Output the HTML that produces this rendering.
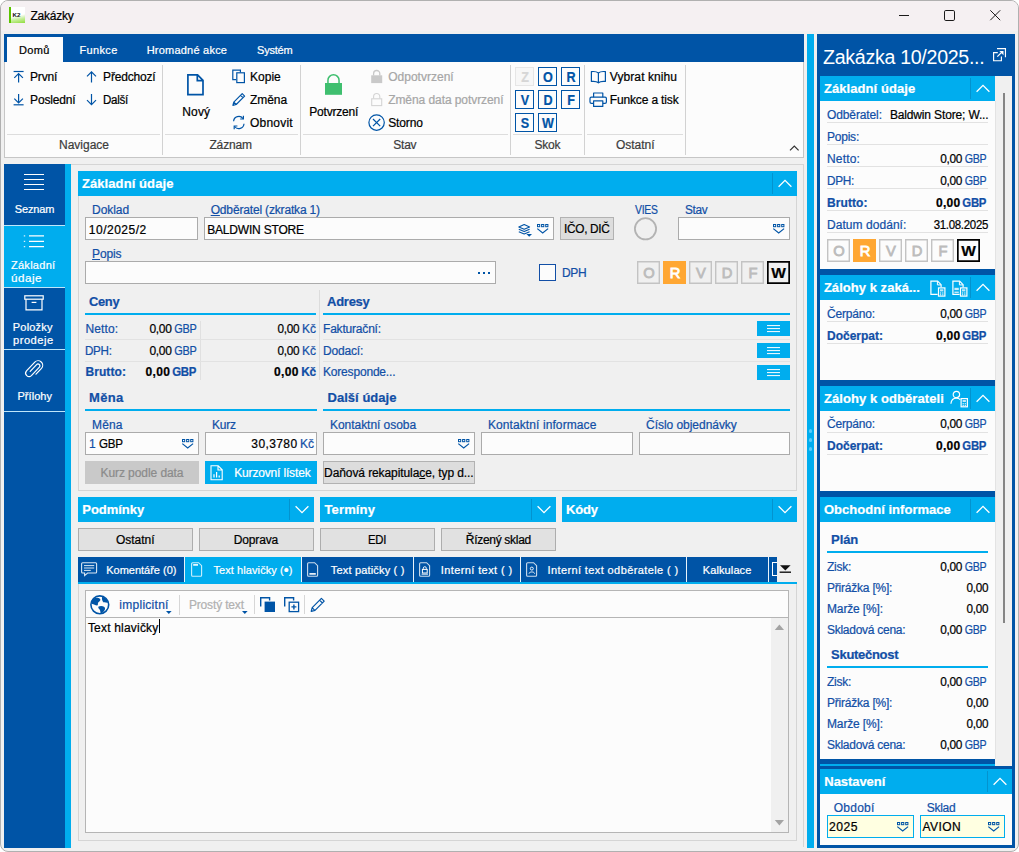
<!DOCTYPE html>
<html lang="cs"><head><meta charset="utf-8"><title>Zakázky</title>
<style>
html,body{margin:0;padding:0;}
body{width:1019px;height:852px;position:relative;overflow:hidden;background:#fff;font-family:"Liberation Sans",sans-serif;}
body div,body span.t,body svg{position:absolute;}
.t{white-space:nowrap;-webkit-text-stroke:0.22px currentColor;}
div.t span{position:static;}
svg{overflow:visible;}
u{text-decoration:underline;text-underline-offset:1px;}
</style></head><body>
<div style="left:0px;top:0px;width:1019px;height:852px;background:#f0f0f0;border:1px solid #b0b0b0;box-sizing:border-box;border-radius:8px;overflow:hidden;"><div style="left:0;top:0;width:1019px;height:30px;background:#f5f0f2"></div></div>
<div style="left:9px;top:7px;width:16px;height:16px;background:linear-gradient(168deg,#fff 52%,#c9efa0 72%,#8fdc3c 100%);border-left:2px solid #5cc400;box-sizing:border-box;"></div>
<span class="t" id="t1" style="top:5.40px;font-size:6.2px;color:#111;line-height:16px;font-weight:bold;left:12.50px;line-height:8px;margin-top:6px;-webkit-text-stroke:0;">K2</span>
<span class="t" id="t2" style="top:7.80px;font-size:12px;color:#000;line-height:16px;letter-spacing:-0.241px;left:30.50px;">Zakázky</span>
<svg style="left:895px;top:5px;" width="120" height="22" viewBox="0 0 120 22"><g fill="none" stroke="#1a1a1a" stroke-width="1">
<path d="M4 10.5 H14"/><rect x="49.5" y="5.5" width="10" height="10" rx="1.3"/><path d="M95.3 5.3 L105.2 15.2 M105.2 5.3 L95.3 15.2"/></g></svg>
<div style="left:4px;top:34px;width:800px;height:28px;background:#0054a6;"></div>
<div style="left:4px;top:62px;width:800px;height:96px;background:#fcfcfc;border:1px solid #c6c6c6;box-sizing:border-box;border-top:none;"></div>
<div style="left:7px;top:37px;width:56px;height:25px;background:#fcfcfc;"></div>
<span class="t" id="t3" style="top:42.30px;font-size:11px;color:#000;line-height:16px;letter-spacing:0.364px;left:19.00px;">Domů</span>
<span class="t" id="t4" style="top:42.30px;font-size:11px;color:#fff;line-height:16px;letter-spacing:0.354px;left:79.50px;">Funkce</span>
<span class="t" id="t5" style="top:42.30px;font-size:11px;color:#fff;line-height:16px;letter-spacing:0.219px;left:146.70px;">Hromadné akce</span>
<span class="t" id="t6" style="top:42.30px;font-size:11px;color:#fff;line-height:16px;letter-spacing:-0.198px;left:257.00px;">Systém</span>
<div style="left:162px;top:65px;width:1px;height:90px;background:#d2d2d2;"></div>
<div style="left:300px;top:65px;width:1px;height:90px;background:#d2d2d2;"></div>
<div style="left:510px;top:65px;width:1px;height:90px;background:#d2d2d2;"></div>
<div style="left:584px;top:65px;width:1px;height:90px;background:#d2d2d2;"></div>
<div style="left:685px;top:65px;width:1px;height:90px;background:#d2d2d2;"></div>
<div style="left:7px;top:134px;width:153px;height:1px;background:#dddddd;"></div>
<div style="left:165px;top:134px;width:133px;height:1px;background:#dddddd;"></div>
<div style="left:303px;top:134px;width:205px;height:1px;background:#dddddd;"></div>
<div style="left:513px;top:134px;width:69px;height:1px;background:#dddddd;"></div>
<div style="left:587px;top:134px;width:96px;height:1px;background:#dddddd;"></div>
<div class="t" style="top:137.20px;font-size:12px;color:#3c3c3c;line-height:16px;letter-spacing:-0.004px;left:-66.00px;width:300px;text-align:center;"><span id="t7">Navigace</span></div>
<div class="t" style="top:137.20px;font-size:12px;color:#3c3c3c;line-height:16px;letter-spacing:-0.143px;left:80.68px;width:300px;text-align:center;"><span id="t8">Záznam</span></div>
<div class="t" style="top:137.20px;font-size:12px;color:#3c3c3c;line-height:16px;letter-spacing:-0.254px;left:254.87px;width:300px;text-align:center;"><span id="t9">Stav</span></div>
<div class="t" style="top:137.20px;font-size:12px;color:#3c3c3c;line-height:16px;letter-spacing:-0.172px;left:397.41px;width:300px;text-align:center;"><span id="t10">Skok</span></div>
<div class="t" style="top:137.20px;font-size:12px;color:#3c3c3c;line-height:16px;letter-spacing:-0.027px;left:485.24px;width:300px;text-align:center;"><span id="t11">Ostatní</span></div>
<svg style="left:789px;top:144px;" width="11" height="8" viewBox="0 0 11 8"><path d="M1 6.3 L5.3 2 L9.6 6.3" fill="none" stroke="#333" stroke-width="1.2"/></svg>
<svg style="left:13px;top:70px;" width="12" height="14" viewBox="0 0 12 14"><g fill="none" stroke="#0054a6" stroke-width="1.2"><path d="M0.6 1.5 H10.6"/><path d="M5.6 12.6 V3.6 M1.3 7.8 L5.6 3.5 L9.9 7.8"/></g></svg>
<span class="t" id="t12" style="top:68.90px;font-size:12px;color:#000;line-height:16px;letter-spacing:-0.223px;left:30.10px;">První</span>
<svg style="left:86px;top:70px;" width="12" height="14" viewBox="0 0 12 14"><g fill="none" stroke="#0054a6" stroke-width="1.2"><path d="M5.5 12.6 V1.8 M1 6.3 L5.5 1.8 L10 6.3"/></g></svg>
<span class="t" id="t13" style="top:68.90px;font-size:12px;color:#000;line-height:16px;letter-spacing:-0.181px;left:103.10px;">Předchozí</span>
<svg style="left:13px;top:93px;" width="12" height="14" viewBox="0 0 12 14"><g fill="none" stroke="#0054a6" stroke-width="1.2"><path d="M0.6 11.8 H10.6"/><path d="M5.6 1 V9.8 M1.3 5.6 L5.6 9.9 L9.9 5.6"/></g></svg>
<span class="t" id="t14" style="top:91.70px;font-size:12px;color:#000;line-height:16px;letter-spacing:-0.175px;left:30.10px;">Poslední</span>
<svg style="left:86px;top:93px;" width="12" height="14" viewBox="0 0 12 14"><g fill="none" stroke="#0054a6" stroke-width="1.2"><path d="M5.5 1 V11.6 M1 7.1 L5.5 11.6 L10 7.1"/></g></svg>
<span class="t" id="t15" style="top:91.70px;font-size:12px;color:#000;line-height:16px;letter-spacing:-0.300px;left:103.10px;transform:scaleX(0.9635);transform-origin:0 50%;">Další</span>
<svg style="left:186px;top:73px;" width="20" height="24" viewBox="0 0 20 24"><path d="M1.9 1.9 H11.6 L17 7.3 V21.7 H1.9 Z M11.3 2.2 V7.6 H16.7" fill="none" stroke="#0054a6" stroke-width="1.7" stroke-linejoin="miter"/></svg>
<div class="t" style="top:103.60px;font-size:12px;color:#000;line-height:16px;letter-spacing:0.164px;left:46.28px;width:300px;text-align:center;"><span id="t16">Nový</span></div>
<svg style="left:232px;top:69px;" width="14" height="15" viewBox="0 0 14 15"><g fill="none" stroke="#0054a6" stroke-width="1.2"><path d="M4.2 10.6 H0.8 V1.2 H8.4 V3.4"/><rect x="4.8" y="3.8" width="7.6" height="9.8" fill="#fcfcfc"/></g></svg>
<span class="t" id="t17" style="top:69.00px;font-size:12px;color:#000;line-height:16px;letter-spacing:0.019px;left:250.00px;">Kopie</span>
<svg style="left:232px;top:92px;" width="14" height="15" viewBox="0 0 14 15"><g fill="none" stroke="#0054a6" stroke-width="1.2" stroke-linejoin="round"><path d="M10.2 1.7 L12.6 4.1 L4.2 12.5 L0.9 13.4 L1.8 10.1 Z M8.6 3.3 L11 5.7 M1.9 10.2 L4.1 12.4"/></g></svg>
<span class="t" id="t18" style="top:91.70px;font-size:12px;color:#000;line-height:16px;letter-spacing:-0.052px;left:250.00px;">Změna</span>
<svg style="left:232px;top:115px;" width="14" height="15" viewBox="0 0 14 15"><g fill="none" stroke="#0054a6" stroke-width="1.2"><path d="M1.6 6.3 A5.2 5.2 0 0 1 11 3.6 M12 8.8 A5.2 5.2 0 0 1 2.6 11.5"/><path d="M11.4 0.8 V4 H8.2 M2.2 14.2 V11 H5.4"/></g></svg>
<span class="t" id="t19" style="top:114.60px;font-size:12px;color:#000;line-height:16px;letter-spacing:0.220px;left:250.00px;">Obnovit</span>
<svg style="left:324px;top:73px;" width="20" height="24" viewBox="0 0 20 24"><path d="M3.95 10.5 V7.3 A5.55 5.55 0 0 1 15.05 7.3 V10.5" fill="none" stroke="#3fbf6f" stroke-width="1.5"/><rect x="1" y="10" width="17" height="11.8" fill="#3fbf6f"/></svg>
<div class="t" style="top:103.60px;font-size:12px;color:#000;line-height:16px;letter-spacing:-0.189px;left:183.71px;width:300px;text-align:center;"><span id="t20">Potvrzení</span></div>
<svg style="left:370px;top:69px;" width="14" height="15" viewBox="0 0 14 15"><path d="M3.6 6.6 V4.6 A3.1 3.1 0 0 1 9.8 4.6 V6.6" fill="none" stroke="#c9c9c9" stroke-width="1.3"/><rect x="1.2" y="6.3" width="11" height="7.8" fill="#c9c9c9"/></svg>
<span class="t" id="t21" style="top:69.00px;font-size:12px;color:#a6a6a6;line-height:16px;letter-spacing:0.011px;left:388.20px;">Odpotvrzení</span>
<svg style="left:370px;top:92px;" width="14" height="15" viewBox="0 0 14 15"><path d="M3.6 6.6 V4.6 A3.1 3.1 0 0 1 9.8 4.6 V6.6" fill="none" stroke="#d4d4d4" stroke-width="1.1"/><rect x="1.7" y="6.8" width="10" height="6.8" fill="none" stroke="#d4d4d4" stroke-width="1.1"/></svg>
<span class="t" id="t22" style="top:91.70px;font-size:12px;color:#a6a6a6;line-height:16px;letter-spacing:-0.072px;left:388.20px;">Změna data potvrzení</span>
<svg style="left:368px;top:114px;" width="18" height="18" viewBox="0 0 18 18"><g fill="none" stroke="#0054a6" stroke-width="1.2"><circle cx="8.6" cy="8.6" r="7.7"/><path d="M5 5 L12.2 12.2 M12.2 5 L5 12.2"/></g></svg>
<span class="t" id="t23" style="top:114.60px;font-size:12px;color:#000;line-height:16px;letter-spacing:-0.110px;left:388.20px;">Storno</span>
<div style="left:515px;top:67px;width:19px;height:19px;background:#f7f7f7;border:1px solid #e6e6e6;box-sizing:border-box;"></div>
<div class="t" style="top:69.20px;font-size:14px;color:#d6d6d6;line-height:16px;font-weight:bold;left:374.50px;width:300px;text-align:center;transform:scaleX(0.9);"><span id="t24">Z</span></div>
<div style="left:538px;top:67px;width:19px;height:19px;background:#fcfcfc;border:1px solid #0054a6;box-sizing:border-box;"></div>
<div class="t" style="top:69.20px;font-size:14px;color:#0054a6;line-height:16px;font-weight:bold;left:397.50px;width:300px;text-align:center;transform:scaleX(0.9);"><span id="t25">O</span></div>
<div style="left:561px;top:67px;width:19px;height:19px;background:#fcfcfc;border:1px solid #0054a6;box-sizing:border-box;"></div>
<div class="t" style="top:69.20px;font-size:14px;color:#0054a6;line-height:16px;font-weight:bold;left:420.50px;width:300px;text-align:center;transform:scaleX(0.9);"><span id="t26">R</span></div>
<div style="left:515px;top:90px;width:19px;height:19px;background:#fcfcfc;border:1px solid #0054a6;box-sizing:border-box;"></div>
<div class="t" style="top:92.20px;font-size:14px;color:#0054a6;line-height:16px;font-weight:bold;left:374.50px;width:300px;text-align:center;transform:scaleX(0.9);"><span id="t27">V</span></div>
<div style="left:538px;top:90px;width:19px;height:19px;background:#fcfcfc;border:1px solid #0054a6;box-sizing:border-box;"></div>
<div class="t" style="top:92.20px;font-size:14px;color:#0054a6;line-height:16px;font-weight:bold;left:397.50px;width:300px;text-align:center;transform:scaleX(0.9);"><span id="t28">D</span></div>
<div style="left:561px;top:90px;width:19px;height:19px;background:#fcfcfc;border:1px solid #0054a6;box-sizing:border-box;"></div>
<div class="t" style="top:92.20px;font-size:14px;color:#0054a6;line-height:16px;font-weight:bold;left:420.50px;width:300px;text-align:center;transform:scaleX(0.9);"><span id="t29">F</span></div>
<div style="left:515px;top:113px;width:19px;height:19px;background:#fcfcfc;border:1px solid #0054a6;box-sizing:border-box;"></div>
<div class="t" style="top:115.20px;font-size:14px;color:#0054a6;line-height:16px;font-weight:bold;left:374.50px;width:300px;text-align:center;transform:scaleX(0.9);"><span id="t30">S</span></div>
<div style="left:538px;top:113px;width:19px;height:19px;background:#fcfcfc;border:1px solid #0054a6;box-sizing:border-box;"></div>
<div class="t" style="top:115.20px;font-size:14px;color:#0054a6;line-height:16px;font-weight:bold;left:397.50px;width:300px;text-align:center;transform:scaleX(0.9);"><span id="t31">W</span></div>
<svg style="left:590px;top:70px;" width="17" height="14" viewBox="0 0 17 14"><g fill="none" stroke="#0054a6" stroke-width="1.2" stroke-linejoin="round"><path d="M8.4 3 C6.8 1.6 4 1.3 1.4 1.6 V11.4 C4 11.1 6.8 11.4 8.4 12.8 C10 11.4 12.8 11.1 15.4 11.4 V1.6 C12.8 1.3 10 1.6 8.4 3 Z M8.4 3 V12.6"/></g></svg>
<span class="t" id="t32" style="top:69.00px;font-size:12px;color:#000;line-height:16px;letter-spacing:0.086px;left:609.80px;">Vybrat knihu</span>
<svg style="left:589px;top:92px;" width="19" height="16" viewBox="0 0 19 16"><g fill="none" stroke="#0054a6" stroke-width="1.2" stroke-linejoin="round"><path d="M4.6 5.2 V1 H13.8 V5.2"/><path d="M4.6 11.4 H2.4 A1.4 1.4 0 0 1 1 10 V6.6 A1.4 1.4 0 0 1 2.4 5.2 H16 A1.4 1.4 0 0 1 17.4 6.6 V10 A1.4 1.4 0 0 1 16 11.4 H13.8"/><rect x="4.6" y="8.8" width="9.2" height="5.6"/></g></svg>
<span class="t" id="t33" style="top:91.70px;font-size:12px;color:#000;line-height:16px;letter-spacing:-0.154px;left:609.80px;">Funkce a tisk</span>
<div style="left:807px;top:34px;width:7px;height:814px;background:#00adee;"></div>
<div style="left:808.9px;top:429.2px;width:3.6px;height:3.6px;background:#57cbfb;border-radius:50%;"></div>
<div style="left:808.9px;top:438.2px;width:3.6px;height:3.6px;background:#57cbfb;border-radius:50%;"></div>
<div style="left:808.9px;top:447.2px;width:3.6px;height:3.6px;background:#57cbfb;border-radius:50%;"></div>
<div style="left:817px;top:34px;width:198px;height:814px;background:#0054a6;"></div>
<span class="t" id="t34" style="top:48.50px;font-size:20px;color:#fff;line-height:16px;letter-spacing:-0.300px;left:822.80px;transform:scaleX(0.9799);transform-origin:0 50%;line-height:24px;margin-top:-4px;-webkit-text-stroke:0;">Zakázka 10/2025...</span>
<svg style="left:992px;top:47px;" width="16" height="16" viewBox="0 0 16 16"><g fill="none" stroke="#fff" stroke-width="1.15"><path d="M5.8 5.6 H1.6 V13.7 H9.4 V9.6"/><path d="M5 1.55 H13.45 V10.2"/><path d="M5.3 9.7 L10 5"/></g><path d="M7.4 4.1 H11.5 V8.2 Z" fill="#fff"/></svg>
<div style="left:995px;top:76px;width:17px;height:690px;background:#f0f0f0;"></div>
<div style="left:994.5px;top:101px;width:1px;height:658px;background:#e3e3e3;"></div>
<div style="left:1003px;top:93px;width:2px;height:530px;background:#858585;"></div>
<div style="left:820px;top:101px;width:175px;height:168px;background:#fcfcfc;"></div>
<div style="left:820px;top:76px;width:175px;height:25px;background:#00adee;"></div>
<span class="t" id="t35" style="top:81.10px;font-size:13px;color:#fff;line-height:16px;font-weight:bold;letter-spacing:0.085px;left:823.90px;">Základní údaje</span>
<div style="left:970px;top:78px;width:1px;height:21px;background:#0393cf;"></div>
<svg style="left:975.5px;top:84px;" width="14" height="9" viewBox="0 0 14 9"><path d="M0.6 7.8 L7 1.4 L13.4 7.8" fill="none" stroke="#fff" stroke-width="1.3"/></svg>
<span class="t" id="t36" style="top:106.90px;font-size:12px;color:#124fa6;line-height:16px;letter-spacing:-0.115px;left:827.00px;">Odběratel:</span>
<div style="left:827.0px;top:122px;width:161.0px;height:1px;background:#e2e2e2;"></div>
<span class="t" id="t37" style="top:106.90px;font-size:12px;color:#000;line-height:16px;letter-spacing:-0.146px;left:889.90px;">Baldwin Store; W...</span>
<span class="t" id="t38" style="top:129.00px;font-size:12px;color:#124fa6;line-height:16px;letter-spacing:-0.227px;left:827.00px;">Popis:</span>
<div style="left:827.0px;top:144px;width:161.0px;height:1px;background:#e2e2e2;"></div>
<span class="t" id="t39" style="top:150.90px;font-size:12px;color:#124fa6;line-height:16px;letter-spacing:0.164px;left:827.00px;">Netto:</span>
<span class="t" id="t40" style="top:150.90px;font-size:12px;color:#124fa6;line-height:16px;letter-spacing:-0.300px;right:32.47px;transform:scaleX(0.8878);transform-origin:100% 50%;">GBP</span>
<span class="t" id="t41" style="top:150.90px;font-size:12px;color:#000;line-height:16px;letter-spacing:-0.300px;right:56.80px;transform:scaleX(0.9883);transform-origin:100% 50%;">0,00</span>
<div style="left:827.0px;top:166px;width:161.0px;height:1px;background:#e2e2e2;"></div>
<span class="t" id="t42" style="top:172.70px;font-size:12px;color:#124fa6;line-height:16px;letter-spacing:-0.300px;left:827.00px;transform:scaleX(0.9828);transform-origin:0 50%;">DPH:</span>
<span class="t" id="t43" style="top:172.70px;font-size:12px;color:#124fa6;line-height:16px;letter-spacing:-0.300px;right:32.47px;transform:scaleX(0.8878);transform-origin:100% 50%;">GBP</span>
<span class="t" id="t44" style="top:172.70px;font-size:12px;color:#000;line-height:16px;letter-spacing:-0.300px;right:56.80px;transform:scaleX(0.9883);transform-origin:100% 50%;">0,00</span>
<div style="left:827.0px;top:188px;width:161.0px;height:1px;background:#e2e2e2;"></div>
<span class="t" id="t45" style="top:194.70px;font-size:12px;color:#124fa6;line-height:16px;font-weight:bold;letter-spacing:0.074px;left:827.00px;">Brutto:</span>
<span class="t" id="t46" style="top:194.70px;font-size:12px;color:#124fa6;line-height:16px;font-weight:bold;letter-spacing:-0.300px;right:32.48px;transform:scaleX(0.9476);transform-origin:100% 50%;">GBP</span>
<span class="t" id="t47" style="top:194.70px;font-size:12px;color:#000;line-height:16px;font-weight:bold;letter-spacing:0.285px;right:58.51px;">0,00</span>
<div style="left:827.0px;top:210px;width:161.0px;height:1px;background:#e2e2e2;"></div>
<span class="t" id="t48" style="top:216.70px;font-size:12px;color:#124fa6;line-height:16px;letter-spacing:0.052px;left:827.00px;">Datum dodání:</span>
<span class="t" id="t49" style="top:216.70px;font-size:12px;color:#000;line-height:16px;letter-spacing:-0.300px;right:31.19px;transform:scaleX(0.9533);transform-origin:100% 50%;">31.08.2025</span>
<div style="left:827.0px;top:232px;width:161.0px;height:1px;background:#e2e2e2;"></div>
<div style="left:827px;top:239px;width:23px;height:23px;box-shadow:inset 0 0 0 1.4px #c3c3c3;"></div>
<div class="t" style="top:242.80px;font-size:15.5px;color:#bcbcbc;line-height:16px;left:688.50px;width:300px;text-align:center;line-height:20px;margin-top:-2px;-webkit-text-stroke:0.85px #bcbcbc;transform:scaleX(0.95);"><span id="t50">O</span></div>
<div style="left:853px;top:239px;width:23px;height:23px;background:#ffa733;"></div>
<div class="t" style="top:242.80px;font-size:15.5px;color:#fff;line-height:16px;left:714.50px;width:300px;text-align:center;line-height:20px;margin-top:-2px;-webkit-text-stroke:0.85px #fff;transform:scaleX(0.95);"><span id="t51">R</span></div>
<div style="left:879px;top:239px;width:23px;height:23px;box-shadow:inset 0 0 0 1.4px #c3c3c3;"></div>
<div class="t" style="top:242.80px;font-size:15.5px;color:#bcbcbc;line-height:16px;left:740.50px;width:300px;text-align:center;line-height:20px;margin-top:-2px;-webkit-text-stroke:0.85px #bcbcbc;transform:scaleX(0.95);"><span id="t52">V</span></div>
<div style="left:905px;top:239px;width:23px;height:23px;box-shadow:inset 0 0 0 1.4px #c3c3c3;"></div>
<div class="t" style="top:242.80px;font-size:15.5px;color:#bcbcbc;line-height:16px;left:766.50px;width:300px;text-align:center;line-height:20px;margin-top:-2px;-webkit-text-stroke:0.85px #bcbcbc;transform:scaleX(0.95);"><span id="t53">D</span></div>
<div style="left:931px;top:239px;width:23px;height:23px;box-shadow:inset 0 0 0 1.4px #c3c3c3;"></div>
<div class="t" style="top:242.80px;font-size:15.5px;color:#bcbcbc;line-height:16px;left:792.50px;width:300px;text-align:center;line-height:20px;margin-top:-2px;-webkit-text-stroke:0.85px #bcbcbc;transform:scaleX(0.95);"><span id="t54">F</span></div>
<div style="left:957px;top:239px;width:23px;height:23px;box-shadow:inset 0 0 0 1.7px #000;"></div>
<div class="t" style="top:242.80px;font-size:15.5px;color:#000;line-height:16px;font-weight:bold;left:818.50px;width:300px;text-align:center;line-height:20px;margin-top:-2px;"><span id="t55">W</span></div>
<div style="left:820px;top:300px;width:175px;height:80px;background:#fcfcfc;"></div>
<div style="left:820px;top:275px;width:175px;height:25px;background:#00adee;"></div>
<span class="t" id="t56" style="top:280.10px;font-size:13px;color:#fff;line-height:16px;font-weight:bold;letter-spacing:0.039px;left:823.90px;">Zálohy k zaká...</span>
<div style="left:970px;top:277px;width:1px;height:21px;background:#0393cf;"></div>
<svg style="left:975.5px;top:283px;" width="14" height="9" viewBox="0 0 14 9"><path d="M0.6 7.8 L7 1.4 L13.4 7.8" fill="none" stroke="#fff" stroke-width="1.3"/></svg>
<span class="t" id="t57" style="top:305.80px;font-size:12px;color:#124fa6;line-height:16px;letter-spacing:-0.172px;left:827.00px;">Čerpáno:</span>
<span class="t" id="t58" style="top:305.80px;font-size:12px;color:#124fa6;line-height:16px;letter-spacing:-0.300px;right:32.47px;transform:scaleX(0.8878);transform-origin:100% 50%;">GBP</span>
<span class="t" id="t59" style="top:305.80px;font-size:12px;color:#000;line-height:16px;letter-spacing:-0.300px;right:56.80px;transform:scaleX(0.9883);transform-origin:100% 50%;">0,00</span>
<div style="left:827.0px;top:321px;width:161.0px;height:1px;background:#e2e2e2;"></div>
<span class="t" id="t60" style="top:327.60px;font-size:12px;color:#124fa6;line-height:16px;font-weight:bold;letter-spacing:-0.002px;left:827.00px;">Dočerpat:</span>
<span class="t" id="t61" style="top:327.60px;font-size:12px;color:#124fa6;line-height:16px;font-weight:bold;letter-spacing:-0.300px;right:32.48px;transform:scaleX(0.9476);transform-origin:100% 50%;">GBP</span>
<span class="t" id="t62" style="top:327.60px;font-size:12px;color:#000;line-height:16px;font-weight:bold;letter-spacing:0.285px;right:58.51px;">0,00</span>
<div style="left:827.0px;top:343px;width:161.0px;height:1px;background:#e2e2e2;"></div>
<svg style="left:929.5px;top:279px;" width="16" height="18" viewBox="0 0 16 18"><g fill="none" stroke="#fff" stroke-width="1.2"><path d="M7.6 15.4 H0.9 V2.2 H7.6 L11.1 5.7 V8.2"/><path d="M7.4 2.4 V5.9 H10.9" stroke-width="1"/><rect x="8.5" y="8.9" width="6.4" height="8.2"/></g><rect x="10" y="10.3" width="3.4" height="2.1" fill="#fff" opacity="0.75"/><g fill="#fff" opacity="0.9"><rect x="10" y="13.4" width="1.2" height="1.2"/><rect x="12.2" y="13.4" width="1.2" height="1.2"/><rect x="10" y="15.2" width="1.2" height="1.2"/><rect x="12.2" y="15.2" width="1.2" height="1.2"/></g></svg>
<svg style="left:952.2px;top:279px;" width="16" height="18" viewBox="0 0 16 18"><g fill="none" stroke="#fff" stroke-width="1.2"><path d="M7.6 15.4 H0.9 V2.2 H7.6 L11.1 5.7 V8.2"/><path d="M7.4 2.4 V5.9 H10.9" stroke-width="1"/><rect x="8.5" y="8.9" width="6.4" height="8.2"/></g><rect x="10" y="10.3" width="3.4" height="2.1" fill="#fff" opacity="0.75"/><g fill="#fff" opacity="0.9"><rect x="10" y="13.4" width="1.2" height="1.2"/><rect x="12.2" y="13.4" width="1.2" height="1.2"/><rect x="10" y="15.2" width="1.2" height="1.2"/><rect x="12.2" y="15.2" width="1.2" height="1.2"/></g><rect x="2.4" y="8.8" width="4.4" height="2.3" fill="#fff" opacity="0.8"/><path d="M2.4 13.2 H6.8" stroke="#fff" stroke-width="1.1"/></svg>
<div style="left:820px;top:411px;width:175px;height:80px;background:#fcfcfc;"></div>
<div style="left:820px;top:386px;width:175px;height:25px;background:#00adee;"></div>
<span class="t" id="t63" style="top:391.10px;font-size:13px;color:#fff;line-height:16px;font-weight:bold;letter-spacing:0.080px;left:823.90px;">Zálohy k odběrateli</span>
<div style="left:970px;top:388px;width:1px;height:21px;background:#0393cf;"></div>
<svg style="left:975.5px;top:394px;" width="14" height="9" viewBox="0 0 14 9"><path d="M0.6 7.8 L7 1.4 L13.4 7.8" fill="none" stroke="#fff" stroke-width="1.3"/></svg>
<svg style="left:950px;top:390px;" width="19" height="18" viewBox="0 0 19 18"><g fill="none" stroke="#fff" stroke-width="1.2"><circle cx="6.4" cy="4.5" r="3.2"/><path d="M0.9 13.8 C1.3 10 3.4 8.2 6.4 8.2 C8 8.2 9.4 8.8 10.2 9.6"/><rect x="11.1" y="8.6" width="6.3" height="8.2"/></g><rect x="12.6" y="10" width="3.3" height="2" fill="#fff" opacity="0.75"/><g fill="#fff" opacity="0.9"><rect x="12.6" y="13.1" width="1.2" height="1.2"/><rect x="14.7" y="13.1" width="1.2" height="1.2"/><rect x="12.6" y="14.9" width="1.2" height="1.2"/><rect x="14.7" y="14.9" width="1.2" height="1.2"/></g></svg>
<span class="t" id="t64" style="top:416.30px;font-size:12px;color:#124fa6;line-height:16px;letter-spacing:-0.172px;left:827.00px;">Čerpáno:</span>
<span class="t" id="t65" style="top:416.30px;font-size:12px;color:#124fa6;line-height:16px;letter-spacing:-0.300px;right:32.47px;transform:scaleX(0.8878);transform-origin:100% 50%;">GBP</span>
<span class="t" id="t66" style="top:416.30px;font-size:12px;color:#000;line-height:16px;letter-spacing:-0.300px;right:56.80px;transform:scaleX(0.9883);transform-origin:100% 50%;">0,00</span>
<div style="left:827.0px;top:432px;width:161.0px;height:1px;background:#e2e2e2;"></div>
<span class="t" id="t67" style="top:438.10px;font-size:12px;color:#124fa6;line-height:16px;font-weight:bold;letter-spacing:-0.002px;left:827.00px;">Dočerpat:</span>
<span class="t" id="t68" style="top:438.10px;font-size:12px;color:#124fa6;line-height:16px;font-weight:bold;letter-spacing:-0.300px;right:32.48px;transform:scaleX(0.9476);transform-origin:100% 50%;">GBP</span>
<span class="t" id="t69" style="top:438.10px;font-size:12px;color:#000;line-height:16px;font-weight:bold;letter-spacing:0.285px;right:58.51px;">0,00</span>
<div style="left:827.0px;top:454px;width:161.0px;height:1px;background:#e2e2e2;"></div>
<div style="left:820px;top:522px;width:175px;height:237px;background:#fcfcfc;"></div>
<div style="left:820px;top:497px;width:175px;height:25px;background:#00adee;"></div>
<span class="t" id="t70" style="top:502.10px;font-size:13px;color:#fff;line-height:16px;font-weight:bold;letter-spacing:0.033px;left:823.90px;">Obchodní informace</span>
<div style="left:970px;top:499px;width:1px;height:21px;background:#0393cf;"></div>
<svg style="left:975.5px;top:505px;" width="14" height="9" viewBox="0 0 14 9"><path d="M0.6 7.8 L7 1.4 L13.4 7.8" fill="none" stroke="#fff" stroke-width="1.3"/></svg>
<span class="t" id="t71" style="top:532.30px;font-size:13px;color:#124fa6;line-height:16px;font-weight:bold;letter-spacing:-0.117px;left:831.10px;">Plán</span>
<div style="left:827px;top:551px;width:161px;height:2px;background:#00adee;"></div>
<span class="t" id="t72" style="top:558.70px;font-size:12px;color:#124fa6;line-height:16px;letter-spacing:-0.269px;left:827.00px;">Zisk:</span>
<span class="t" id="t73" style="top:558.70px;font-size:12px;color:#124fa6;line-height:16px;letter-spacing:-0.300px;right:32.47px;transform:scaleX(0.8878);transform-origin:100% 50%;">GBP</span>
<span class="t" id="t74" style="top:558.70px;font-size:12px;color:#000;line-height:16px;letter-spacing:-0.300px;right:56.80px;transform:scaleX(0.9883);transform-origin:100% 50%;">0,00</span>
<span class="t" id="t75" style="top:579.80px;font-size:12px;color:#124fa6;line-height:16px;letter-spacing:-0.217px;left:827.00px;">Přirážka [%]:</span>
<span class="t" id="t76" style="top:579.80px;font-size:12px;color:#000;line-height:16px;letter-spacing:-0.300px;right:31.19px;transform:scaleX(0.9748);transform-origin:100% 50%;">0,00</span>
<span class="t" id="t77" style="top:600.90px;font-size:12px;color:#124fa6;line-height:16px;letter-spacing:-0.136px;left:827.00px;">Marže [%]:</span>
<span class="t" id="t78" style="top:600.90px;font-size:12px;color:#000;line-height:16px;letter-spacing:-0.300px;right:31.19px;transform:scaleX(0.9748);transform-origin:100% 50%;">0,00</span>
<span class="t" id="t79" style="top:622.00px;font-size:12px;color:#124fa6;line-height:16px;letter-spacing:-0.269px;left:827.00px;">Skladová cena:</span>
<span class="t" id="t80" style="top:622.00px;font-size:12px;color:#124fa6;line-height:16px;letter-spacing:-0.300px;right:32.47px;transform:scaleX(0.8878);transform-origin:100% 50%;">GBP</span>
<span class="t" id="t81" style="top:622.00px;font-size:12px;color:#000;line-height:16px;letter-spacing:-0.300px;right:56.80px;transform:scaleX(0.9883);transform-origin:100% 50%;">0,00</span>
<span class="t" id="t82" style="top:647.30px;font-size:13px;color:#124fa6;line-height:16px;font-weight:bold;letter-spacing:-0.300px;left:831.10px;">Skutečnost</span>
<div style="left:827px;top:666px;width:161px;height:2px;background:#00adee;"></div>
<span class="t" id="t83" style="top:673.60px;font-size:12px;color:#124fa6;line-height:16px;letter-spacing:-0.269px;left:827.00px;">Zisk:</span>
<span class="t" id="t84" style="top:673.60px;font-size:12px;color:#124fa6;line-height:16px;letter-spacing:-0.300px;right:32.47px;transform:scaleX(0.8878);transform-origin:100% 50%;">GBP</span>
<span class="t" id="t85" style="top:673.60px;font-size:12px;color:#000;line-height:16px;letter-spacing:-0.300px;right:56.80px;transform:scaleX(0.9883);transform-origin:100% 50%;">0,00</span>
<span class="t" id="t86" style="top:694.70px;font-size:12px;color:#124fa6;line-height:16px;letter-spacing:-0.217px;left:827.00px;">Přirážka [%]:</span>
<span class="t" id="t87" style="top:694.70px;font-size:12px;color:#000;line-height:16px;letter-spacing:-0.300px;right:31.19px;transform:scaleX(0.9748);transform-origin:100% 50%;">0,00</span>
<span class="t" id="t88" style="top:715.70px;font-size:12px;color:#124fa6;line-height:16px;letter-spacing:-0.136px;left:827.00px;">Marže [%]:</span>
<span class="t" id="t89" style="top:715.70px;font-size:12px;color:#000;line-height:16px;letter-spacing:-0.300px;right:31.19px;transform:scaleX(0.9748);transform-origin:100% 50%;">0,00</span>
<span class="t" id="t90" style="top:736.70px;font-size:12px;color:#124fa6;line-height:16px;letter-spacing:-0.269px;left:827.00px;">Skladová cena:</span>
<span class="t" id="t91" style="top:736.70px;font-size:12px;color:#124fa6;line-height:16px;letter-spacing:-0.300px;right:32.47px;transform:scaleX(0.8878);transform-origin:100% 50%;">GBP</span>
<span class="t" id="t92" style="top:736.70px;font-size:12px;color:#000;line-height:16px;letter-spacing:-0.300px;right:56.80px;transform:scaleX(0.9883);transform-origin:100% 50%;">0,00</span>
<div style="left:820px;top:764.4px;width:175px;height:1.2px;background:#00adee;"></div>
<div style="left:820.4px;top:793px;width:191.6px;height:51.6px;background:#fcfcfc;"></div>
<div style="left:820.4px;top:769.2px;width:191.6px;height:24.5px;background:#00adee;"></div>
<span class="t" id="t93" style="top:774.30px;font-size:13px;color:#fff;line-height:16px;font-weight:bold;letter-spacing:-0.058px;left:824.30px;">Nastavení</span>
<div style="left:987.0px;top:771.2px;width:1px;height:20.5px;background:#0393cf;"></div>
<svg style="left:992.5px;top:777.2px;" width="14" height="9" viewBox="0 0 14 9"><path d="M0.6 7.8 L7 1.4 L13.4 7.8" fill="none" stroke="#fff" stroke-width="1.3"/></svg>
<span class="t" id="t94" style="top:799.60px;font-size:12px;color:#124fa6;line-height:16px;letter-spacing:0.221px;left:833.80px;">Období</span>
<span class="t" id="t95" style="top:799.60px;font-size:12px;color:#124fa6;line-height:16px;letter-spacing:-0.300px;left:926.80px;">Sklad</span>
<div style="left:827px;top:815px;width:87px;height:23px;background:#ffffe1;border:1px solid #00adee;box-sizing:border-box;"></div>
<div style="left:920px;top:815px;width:85px;height:23px;background:#ffffe1;border:1px solid #00adee;box-sizing:border-box;"></div>
<span class="t" id="t96" style="top:819.40px;font-size:12px;color:#000;line-height:16px;letter-spacing:0.500px;left:829.30px;transform:scaleX(1.0138);transform-origin:0 50%;">2025</span>
<span class="t" id="t97" style="top:819.40px;font-size:12px;color:#000;line-height:16px;letter-spacing:0.429px;left:922.50px;">AVION</span>
<svg style="left:896.8px;top:822px;" width="12" height="10" viewBox="0 0 12 10"><g fill="none" stroke="#0054a6" stroke-width="1"><rect x="0.5" y="0.5" width="2.2" height="2.2"/><rect x="4.6" y="0.5" width="2.2" height="2.2"/><rect x="8.7" y="0.5" width="2.2" height="2.2"/><path d="M0.3 4.6 L5.7 9 L11.1 4.6" stroke-width="1.2"/></g></svg>
<svg style="left:987.8px;top:822px;" width="12" height="10" viewBox="0 0 12 10"><g fill="none" stroke="#0054a6" stroke-width="1"><rect x="0.5" y="0.5" width="2.2" height="2.2"/><rect x="4.6" y="0.5" width="2.2" height="2.2"/><rect x="8.7" y="0.5" width="2.2" height="2.2"/><path d="M0.3 4.6 L5.7 9 L11.1 4.6" stroke-width="1.2"/></g></svg>
<div style="left:4px;top:164px;width:61px;height:684px;background:#0054a6;"></div>
<div style="left:65px;top:164px;width:6px;height:684px;background:#00adee;"></div>
<div style="left:4px;top:226px;width:61px;height:61px;background:#00adee;"></div>
<div style="left:4px;top:225px;width:61px;height:1px;background:#bfe6fa;"></div>
<div style="left:4px;top:287px;width:61px;height:1px;background:#bfe6fa;"></div>
<div style="left:4px;top:349px;width:61px;height:1px;background:#bfe6fa;"></div>
<div style="left:4px;top:411px;width:61px;height:1px;background:#bfe6fa;"></div>
<svg style="left:24px;top:173px;" width="20" height="18" viewBox="0 0 20 18"><path d="M0 1.5 H20 M0 6.5 H20 M0 11.5 H20 M0 16.5 H20" stroke="#fff" stroke-width="1.2" fill="none"/></svg>
<div class="t" style="top:200.90px;font-size:11px;color:#fff;line-height:16px;letter-spacing:-0.177px;left:-115.49px;width:300px;text-align:center;"><span id="t98">Seznam</span></div>
<svg style="left:23px;top:234px;" width="22" height="14" viewBox="0 0 22 14"><path d="M6 1.8 H21 M6 7.3 H21 M6 12.7 H21" stroke="#fff" stroke-width="1.2" fill="none"/><path d="M0.8 1.8 H2.2 M0.8 7.3 H2.2 M0.8 12.7 H2.2" stroke="#d8f1fd" stroke-width="1.2" fill="none"/></svg>
<span class="t" id="t99" style="top:256.90px;font-size:11px;color:#fff;line-height:16px;letter-spacing:0.300px;left:10.90px;">Základní</span>
<span class="t" id="t100" style="top:269.70px;font-size:11px;color:#fff;line-height:16px;letter-spacing:0.500px;left:10.90px;transform:scaleX(1.0570);transform-origin:0 50%;">údaje</span>
<svg style="left:24px;top:295px;" width="20" height="17" viewBox="0 0 20 17"><g fill="none" stroke="#fff" stroke-width="1.2"><rect x="0.8" y="0.8" width="18.4" height="3.4"/><path d="M2 4.2 V14.8 H18 V4.2"/><path d="M7.6 7.4 H12.4"/></g></svg>
<span class="t" id="t101" style="top:319.40px;font-size:11px;color:#fff;line-height:16px;letter-spacing:0.196px;left:12.80px;">Položky</span>
<span class="t" id="t102" style="top:331.50px;font-size:11px;color:#fff;line-height:16px;letter-spacing:0.500px;left:12.80px;transform:scaleX(1.0124);transform-origin:0 50%;">prodeje</span>
<svg style="left:25px;top:359px;" width="19" height="20" viewBox="0 0 19 20"><path d="M5.2 12.4 L11.6 5.6 A1.9 1.9 0 0 1 14.4 8.2 L6.4 16.6 A3.4 3.4 0 0 1 1.5 11.9 L9.8 3.1 A4.6 4.6 0 0 1 16.5 9.4 L11 15.2" fill="none" stroke="#fff" stroke-width="1.2" stroke-linecap="round"/></svg>
<div class="t" style="top:387.60px;font-size:11px;color:#fff;line-height:16px;letter-spacing:0.050px;left:-115.27px;width:300px;text-align:center;"><span id="t103">Přílohy</span></div>
<div style="left:71px;top:164px;width:733px;height:683px;background:#f0f0f0;border:1px solid #d5d5d5;box-sizing:border-box;border-left:none;border-bottom:none;"></div>
<div style="left:78px;top:196px;width:719px;height:295px;background:#f0f0f0;border:1px solid #d5d5d5;box-sizing:border-box;border-top:none;"></div>
<div style="left:78px;top:171px;width:719px;height:25px;background:#00adee;"></div>
<span class="t" id="t104" style="top:176.10px;font-size:13px;color:#fff;line-height:16px;font-weight:bold;letter-spacing:0.092px;left:81.90px;">Základní údaje</span>
<div style="left:772px;top:173px;width:1px;height:21px;background:#0393cf;"></div>
<svg style="left:777.5px;top:179px;" width="14" height="9" viewBox="0 0 14 9"><path d="M0.6 7.8 L7 1.4 L13.4 7.8" fill="none" stroke="#fff" stroke-width="1.3"/></svg>
<span class="t" id="t105" style="top:202.00px;font-size:12px;color:#124fa6;line-height:16px;letter-spacing:-0.060px;left:92.10px;">Doklad</span>
<div style="left:85px;top:217px;width:113px;height:23px;background:#fcfcfc;border:1px solid #ababab;box-sizing:border-box;"></div>
<span class="t" id="t106" style="top:222.00px;font-size:12px;color:#000;line-height:16px;letter-spacing:0.500px;left:88.80px;">10/2025/2</span>
<span class="t" id="t107" style="top:202.00px;font-size:12px;color:#124fa6;line-height:16px;letter-spacing:-0.164px;left:210.70px;"><u>O</u>dběratel (zkratka 1)</span>
<div style="left:204px;top:217px;width:350px;height:23px;background:#fcfcfc;border:1px solid #ababab;box-sizing:border-box;"></div>
<span class="t" id="t108" style="top:222.00px;font-size:12px;color:#000;line-height:16px;letter-spacing:-0.188px;left:207.20px;">BALDWIN STORE</span>
<svg style="left:517.5px;top:223.5px;" width="15" height="14" viewBox="0 0 15 14"><g fill="none" stroke="#0054a6" stroke-width="1.1" stroke-linejoin="round"><path d="M6.2 0.6 L11.6 2.9 L6.2 5.2 L0.8 2.9 Z"/><path d="M0.8 5.3 L6.2 7.6 L11.6 5.3 M0.8 7.7 L6.2 10 L11.6 7.7"/></g><path d="M8.4 9.9 H14 L11.2 12.8 Z" fill="#0054a6"/></svg>
<svg style="left:537px;top:224px;" width="12" height="10" viewBox="0 0 12 10"><g fill="none" stroke="#0054a6" stroke-width="1"><rect x="0.5" y="0.5" width="2.2" height="2.2"/><rect x="4.6" y="0.5" width="2.2" height="2.2"/><rect x="8.7" y="0.5" width="2.2" height="2.2"/><path d="M0.3 4.6 L5.7 9 L11.1 4.6" stroke-width="1.2"/></g></svg>
<div style="left:560px;top:217px;width:54px;height:23px;background:#dddddd;border:1px solid #b2b2b2;box-sizing:border-box;"></div>
<span class="t" id="t109" style="top:221.20px;font-size:12px;color:#000;line-height:16px;letter-spacing:-0.300px;left:563.90px;transform:scaleX(0.9855);transform-origin:0 50%;">IČO, DIČ</span>
<span class="t" id="t110" style="top:201.80px;font-size:12px;color:#124fa6;line-height:16px;letter-spacing:-0.300px;left:635.10px;transform:scaleX(0.8639);transform-origin:0 50%;">VIES</span>
<svg style="left:633px;top:217px;" width="25" height="25" viewBox="0 0 25 25"><circle cx="12.5" cy="11.8" r="10.6" fill="none" stroke="#b3b3b3" stroke-width="1.8"/></svg>
<span class="t" id="t111" style="top:202.00px;font-size:12px;color:#124fa6;line-height:16px;letter-spacing:-0.300px;left:685.10px;transform:scaleX(0.9818);transform-origin:0 50%;">Stav</span>
<div style="left:678px;top:217px;width:112px;height:23px;background:#fcfcfc;border:1px solid #ababab;box-sizing:border-box;"></div>
<svg style="left:772.8px;top:224px;" width="12" height="10" viewBox="0 0 12 10"><g fill="none" stroke="#0054a6" stroke-width="1"><rect x="0.5" y="0.5" width="2.2" height="2.2"/><rect x="4.6" y="0.5" width="2.2" height="2.2"/><rect x="8.7" y="0.5" width="2.2" height="2.2"/><path d="M0.3 4.6 L5.7 9 L11.1 4.6" stroke-width="1.2"/></g></svg>
<span class="t" id="t112" style="top:246.00px;font-size:12px;color:#124fa6;line-height:16px;letter-spacing:-0.126px;left:92.10px;"><u>P</u>opis</span>
<div style="left:85px;top:261px;width:411px;height:23px;background:#fcfcfc;border:1px solid #ababab;box-sizing:border-box;"></div>
<div style="left:478.2px;top:271.5px;width:2px;height:2px;background:#0054a6;"></div>
<div style="left:483.2px;top:271.5px;width:2px;height:2px;background:#0054a6;"></div>
<div style="left:488.2px;top:271.5px;width:2px;height:2px;background:#0054a6;"></div>
<div style="left:539px;top:264px;width:17px;height:17px;background:#fcfcfc;border:1px solid #124fa6;box-sizing:border-box;"></div>
<span class="t" id="t113" style="top:264.90px;font-size:12px;color:#124fa6;line-height:16px;letter-spacing:-0.248px;left:561.90px;">DPH</span>
<div style="left:637px;top:261px;width:23px;height:23px;box-shadow:inset 0 0 0 1.4px #c3c3c3;"></div>
<div class="t" style="top:264.80px;font-size:15.5px;color:#bcbcbc;line-height:16px;left:498.50px;width:300px;text-align:center;line-height:20px;margin-top:-2px;-webkit-text-stroke:0.85px #bcbcbc;transform:scaleX(0.95);"><span id="t114">O</span></div>
<div style="left:663px;top:261px;width:23px;height:23px;background:#ffa733;"></div>
<div class="t" style="top:264.80px;font-size:15.5px;color:#fff;line-height:16px;left:524.50px;width:300px;text-align:center;line-height:20px;margin-top:-2px;-webkit-text-stroke:0.85px #fff;transform:scaleX(0.95);"><span id="t115">R</span></div>
<div style="left:689px;top:261px;width:23px;height:23px;box-shadow:inset 0 0 0 1.4px #c3c3c3;"></div>
<div class="t" style="top:264.80px;font-size:15.5px;color:#bcbcbc;line-height:16px;left:550.50px;width:300px;text-align:center;line-height:20px;margin-top:-2px;-webkit-text-stroke:0.85px #bcbcbc;transform:scaleX(0.95);"><span id="t116">V</span></div>
<div style="left:715px;top:261px;width:23px;height:23px;box-shadow:inset 0 0 0 1.4px #c3c3c3;"></div>
<div class="t" style="top:264.80px;font-size:15.5px;color:#bcbcbc;line-height:16px;left:576.50px;width:300px;text-align:center;line-height:20px;margin-top:-2px;-webkit-text-stroke:0.85px #bcbcbc;transform:scaleX(0.95);"><span id="t117">D</span></div>
<div style="left:741px;top:261px;width:23px;height:23px;box-shadow:inset 0 0 0 1.4px #c3c3c3;"></div>
<div class="t" style="top:264.80px;font-size:15.5px;color:#bcbcbc;line-height:16px;left:602.50px;width:300px;text-align:center;line-height:20px;margin-top:-2px;-webkit-text-stroke:0.85px #bcbcbc;transform:scaleX(0.95);"><span id="t118">F</span></div>
<div style="left:767px;top:261px;width:23px;height:23px;box-shadow:inset 0 0 0 1.7px #000;"></div>
<div class="t" style="top:264.80px;font-size:15.5px;color:#000;line-height:16px;font-weight:bold;left:628.50px;width:300px;text-align:center;line-height:20px;margin-top:-2px;"><span id="t119">W</span></div>
<div style="left:319px;top:290px;width:1px;height:90px;background:#dcdcdc;"></div>
<span class="t" id="t120" style="top:294.30px;font-size:13px;color:#124fa6;line-height:16px;font-weight:bold;letter-spacing:-0.300px;left:88.90px;transform:scaleX(0.9903);transform-origin:0 50%;">Ceny</span>
<div style="left:85px;top:313px;width:231px;height:2px;background:#00adee;"></div>
<span class="t" id="t121" style="top:294.30px;font-size:13px;color:#124fa6;line-height:16px;font-weight:bold;letter-spacing:-0.280px;left:327.10px;">Adresy</span>
<div style="left:323px;top:313px;width:467px;height:2px;background:#00adee;"></div>
<div style="left:200px;top:321px;width:1px;height:59px;background:#e0e0e0;"></div>
<div style="left:85px;top:339px;width:231px;height:1px;background:#e2e2e2;"></div>
<div style="left:85px;top:361px;width:231px;height:1px;background:#e2e2e2;"></div>
<div style="left:323px;top:339px;width:467px;height:1px;background:#e2e2e2;"></div>
<div style="left:323px;top:361px;width:467px;height:1px;background:#e2e2e2;"></div>
<span class="t" id="t122" style="top:320.60px;font-size:12px;color:#124fa6;line-height:16px;letter-spacing:0.131px;left:85.40px;">Netto:</span>
<span class="t" id="t123" style="top:320.60px;font-size:12px;color:#124fa6;line-height:16px;letter-spacing:-0.300px;right:822.87px;transform:scaleX(0.9082);transform-origin:100% 50%;">GBP</span>
<span class="t" id="t124" style="top:320.60px;font-size:12px;color:#000;line-height:16px;letter-spacing:-0.290px;right:847.39px;">0,00</span>
<span class="t" id="t125" style="top:320.60px;font-size:12px;color:#124fa6;line-height:16px;letter-spacing:-0.058px;right:703.06px;">Kč</span>
<span class="t" id="t126" style="top:320.60px;font-size:12px;color:#000;line-height:16px;letter-spacing:-0.300px;right:719.79px;transform:scaleX(0.9793);transform-origin:100% 50%;">0,00</span>
<span class="t" id="t127" style="top:342.50px;font-size:12px;color:#124fa6;line-height:16px;letter-spacing:-0.300px;left:85.40px;transform:scaleX(0.9683);transform-origin:0 50%;">DPH:</span>
<span class="t" id="t128" style="top:342.50px;font-size:12px;color:#124fa6;line-height:16px;letter-spacing:-0.300px;right:822.87px;transform:scaleX(0.9082);transform-origin:100% 50%;">GBP</span>
<span class="t" id="t129" style="top:342.50px;font-size:12px;color:#000;line-height:16px;letter-spacing:-0.290px;right:847.39px;">0,00</span>
<span class="t" id="t130" style="top:342.50px;font-size:12px;color:#124fa6;line-height:16px;letter-spacing:-0.058px;right:703.06px;">Kč</span>
<span class="t" id="t131" style="top:342.50px;font-size:12px;color:#000;line-height:16px;letter-spacing:-0.300px;right:719.79px;transform:scaleX(0.9793);transform-origin:100% 50%;">0,00</span>
<span class="t" id="t132" style="top:364.40px;font-size:12px;color:#124fa6;line-height:16px;font-weight:bold;letter-spacing:0.088px;left:85.40px;">Brutto:</span>
<span class="t" id="t133" style="top:364.40px;font-size:12px;color:#124fa6;line-height:16px;font-weight:bold;letter-spacing:-0.300px;right:822.89px;transform:scaleX(0.9516);transform-origin:100% 50%;">GBP</span>
<span class="t" id="t134" style="top:364.40px;font-size:12px;color:#000;line-height:16px;font-weight:bold;letter-spacing:0.410px;right:848.59px;">0,00</span>
<span class="t" id="t135" style="top:364.40px;font-size:12px;color:#124fa6;line-height:16px;font-weight:bold;letter-spacing:-0.300px;right:703.30px;transform:scaleX(0.9903);transform-origin:100% 50%;">Kč</span>
<span class="t" id="t136" style="top:364.40px;font-size:12px;color:#000;line-height:16px;font-weight:bold;letter-spacing:0.310px;right:720.29px;">0,00</span>
<span class="t" id="t137" style="top:320.60px;font-size:12px;color:#124fa6;line-height:16px;letter-spacing:-0.194px;left:323.00px;">Fakturační:</span>
<span class="t" id="t138" style="top:342.50px;font-size:12px;color:#124fa6;line-height:16px;letter-spacing:-0.180px;left:323.00px;">Dodací:</span>
<span class="t" id="t139" style="top:364.40px;font-size:12px;color:#124fa6;line-height:16px;letter-spacing:-0.186px;left:323.00px;">Koresponde...</span>
<div style="left:757px;top:321px;width:33px;height:15px;background:#00adee;"></div>
<svg style="left:767px;top:325px;" width="13" height="8" viewBox="0 0 13 8"><path d="M0 0.6 H13 M0 3.6 H13 M0 6.6 H13" stroke="#fff" stroke-width="1" fill="none"/></svg>
<div style="left:757px;top:343px;width:33px;height:15px;background:#00adee;"></div>
<svg style="left:767px;top:347px;" width="13" height="8" viewBox="0 0 13 8"><path d="M0 0.6 H13 M0 3.6 H13 M0 6.6 H13" stroke="#fff" stroke-width="1" fill="none"/></svg>
<div style="left:757px;top:365px;width:33px;height:15px;background:#00adee;"></div>
<svg style="left:767px;top:369px;" width="13" height="8" viewBox="0 0 13 8"><path d="M0 0.6 H13 M0 3.6 H13 M0 6.6 H13" stroke="#fff" stroke-width="1" fill="none"/></svg>
<span class="t" id="t140" style="top:390.20px;font-size:13px;color:#124fa6;line-height:16px;font-weight:bold;letter-spacing:0.291px;left:89.10px;">Měna</span>
<div style="left:85px;top:409px;width:232px;height:2px;background:#00adee;"></div>
<span class="t" id="t141" style="top:390.20px;font-size:13px;color:#124fa6;line-height:16px;font-weight:bold;letter-spacing:0.033px;left:327.50px;">Další údaje</span>
<div style="left:323px;top:409px;width:467px;height:2px;background:#00adee;"></div>
<span class="t" id="t142" style="top:416.80px;font-size:12px;color:#124fa6;line-height:16px;letter-spacing:0.092px;left:92.10px;">Měna</span>
<span class="t" id="t143" style="top:416.80px;font-size:12px;color:#124fa6;line-height:16px;letter-spacing:-0.197px;left:211.90px;">Kurz</span>
<span class="t" id="t144" style="top:416.80px;font-size:12px;color:#124fa6;line-height:16px;letter-spacing:-0.042px;left:330.00px;">Kontaktní osoba</span>
<span class="t" id="t145" style="top:416.80px;font-size:12px;color:#124fa6;line-height:16px;letter-spacing:0.098px;left:487.90px;">Kontaktní informace</span>
<span class="t" id="t146" style="top:416.80px;font-size:12px;color:#124fa6;line-height:16px;letter-spacing:-0.037px;left:646.00px;">Číslo objednávky</span>
<div style="left:85px;top:432px;width:114px;height:23px;background:#fcfcfc;border:1px solid #ababab;box-sizing:border-box;"></div>
<div style="left:205px;top:432px;width:112px;height:23px;background:#fcfcfc;border:1px solid #ababab;box-sizing:border-box;"></div>
<div style="left:323px;top:432px;width:152px;height:23px;background:#fcfcfc;border:1px solid #ababab;box-sizing:border-box;"></div>
<div style="left:481px;top:432px;width:152px;height:23px;background:#fcfcfc;border:1px solid #ababab;box-sizing:border-box;"></div>
<div style="left:639px;top:432px;width:151px;height:23px;background:#fcfcfc;border:1px solid #ababab;box-sizing:border-box;"></div>
<span class="t" id="t147" style="top:436.40px;font-size:12px;color:#124fa6;line-height:16px;left:89.10px;">1</span>
<span class="t" id="t148" style="top:436.40px;font-size:12px;color:#000;line-height:16px;letter-spacing:-0.300px;left:98.90px;transform:scaleX(0.9655);transform-origin:0 50%;">GBP</span>
<svg style="left:182px;top:439px;" width="12" height="10" viewBox="0 0 12 10"><g fill="none" stroke="#0054a6" stroke-width="1"><rect x="0.5" y="0.5" width="2.2" height="2.2"/><rect x="4.6" y="0.5" width="2.2" height="2.2"/><rect x="8.7" y="0.5" width="2.2" height="2.2"/><path d="M0.3 4.6 L5.7 9 L11.1 4.6" stroke-width="1.2"/></g></svg>
<svg style="left:457.6px;top:439px;" width="12" height="10" viewBox="0 0 12 10"><g fill="none" stroke="#0054a6" stroke-width="1"><rect x="0.5" y="0.5" width="2.2" height="2.2"/><rect x="4.6" y="0.5" width="2.2" height="2.2"/><rect x="8.7" y="0.5" width="2.2" height="2.2"/><path d="M0.3 4.6 L5.7 9 L11.1 4.6" stroke-width="1.2"/></g></svg>
<span class="t" id="t149" style="top:436.40px;font-size:12px;color:#124fa6;line-height:16px;letter-spacing:0.042px;right:704.86px;">Kč</span>
<span class="t" id="t150" style="top:436.40px;font-size:12px;color:#000;line-height:16px;letter-spacing:0.401px;right:721.50px;">30,3780</span>
<div style="left:85px;top:461px;width:114px;height:23px;background:#c9c9c9;"></div>
<div class="t" style="top:465.00px;font-size:12px;color:#8b8b8b;line-height:16px;letter-spacing:-0.071px;left:-8.04px;width:300px;text-align:center;"><span id="t151">Kurz podle data</span></div>
<div style="left:205px;top:461px;width:112px;height:23px;background:#00adee;"></div>
<svg style="left:210px;top:465px;" width="14" height="16" viewBox="0 0 14 16"><g fill="none" stroke="#fff" stroke-width="1.1"><path d="M1 0.8 H8.2 L12.2 4.8 V14.8 H1 Z M8 1 V5 H12"/><path d="M4 12.4 V9.2 M6.6 12.4 V7 M9.2 12.4 V10.4" stroke-width="1.2"/></g></svg>
<span class="t" id="t152" style="top:465.00px;font-size:12px;color:#fff;line-height:16px;letter-spacing:-0.160px;left:234.20px;">Kurzovní lístek</span>
<div style="left:323px;top:461px;width:152px;height:23px;background:#dddddd;border:1px solid #b2b2b2;box-sizing:border-box;"></div>
<span class="t" id="t153" style="top:465.00px;font-size:12px;color:#000;line-height:16px;letter-spacing:-0.093px;left:324.10px;">Daňová rekapitula<u>c</u>e, typ d...</span>
<div style="left:78px;top:497px;width:236px;height:25px;background:#00adee;"></div>
<span class="t" id="t154" style="top:502.10px;font-size:13px;color:#fff;line-height:16px;font-weight:bold;letter-spacing:-0.041px;left:82.30px;">Podmínky</span>
<div style="left:289px;top:499px;width:1px;height:21px;background:#0393cf;"></div>
<svg style="left:294.5px;top:505px;" width="14" height="9" viewBox="0 0 14 9"><path d="M0.6 1.2 L7 7.6 L13.4 1.2" fill="none" stroke="#fff" stroke-width="1.3"/></svg>
<div style="left:320px;top:497px;width:236px;height:25px;background:#00adee;"></div>
<span class="t" id="t155" style="top:502.10px;font-size:13px;color:#fff;line-height:16px;font-weight:bold;letter-spacing:0.127px;left:324.50px;">Termíny</span>
<div style="left:531px;top:499px;width:1px;height:21px;background:#0393cf;"></div>
<svg style="left:536.5px;top:505px;" width="14" height="9" viewBox="0 0 14 9"><path d="M0.6 1.2 L7 7.6 L13.4 1.2" fill="none" stroke="#fff" stroke-width="1.3"/></svg>
<div style="left:562px;top:497px;width:235px;height:25px;background:#00adee;"></div>
<span class="t" id="t156" style="top:502.10px;font-size:13px;color:#fff;line-height:16px;font-weight:bold;letter-spacing:-0.150px;left:565.90px;">Kódy</span>
<div style="left:772px;top:499px;width:1px;height:21px;background:#0393cf;"></div>
<svg style="left:777.5px;top:505px;" width="14" height="9" viewBox="0 0 14 9"><path d="M0.6 1.2 L7 7.6 L13.4 1.2" fill="none" stroke="#fff" stroke-width="1.3"/></svg>
<div style="left:78px;top:528px;width:115px;height:23px;background:#e1e1e1;border:1px solid #adadad;box-sizing:border-box;"></div>
<div class="t" style="top:531.80px;font-size:12px;color:#000;line-height:16px;letter-spacing:-0.027px;left:-14.76px;width:300px;text-align:center;"><span id="t157">Ostatní</span></div>
<div style="left:199px;top:528px;width:115px;height:23px;background:#e1e1e1;border:1px solid #adadad;box-sizing:border-box;"></div>
<div class="t" style="top:531.80px;font-size:12px;color:#000;line-height:16px;letter-spacing:-0.166px;left:105.92px;width:300px;text-align:center;"><span id="t158">Doprava</span></div>
<div style="left:320px;top:528px;width:115px;height:23px;background:#e1e1e1;border:1px solid #adadad;box-sizing:border-box;"></div>
<div class="t" style="top:531.80px;font-size:12px;color:#000;line-height:16px;letter-spacing:-0.300px;left:227.36px;width:300px;text-align:center;transform:scaleX(0.9416);transform-origin:50% 50%;"><span id="t159">EDI</span></div>
<div style="left:441px;top:528px;width:115px;height:23px;background:#e1e1e1;border:1px solid #adadad;box-sizing:border-box;"></div>
<div class="t" style="top:531.80px;font-size:12px;color:#000;line-height:16px;letter-spacing:-0.300px;left:348.35px;width:300px;text-align:center;"><span id="t160">Řízený sklad</span></div>
<div style="left:78px;top:582px;width:719px;height:2px;background:#00adee;"></div>
<div style="left:78px;top:557px;width:106px;height:25px;background:#0054a6;"></div>
<span class="t" id="t161" style="top:561.80px;font-size:11px;color:#fff;line-height:16px;letter-spacing:-0.001px;left:106.20px;">Komentáře (0)</span>
<svg style="left:81px;top:562px;" width="17" height="15" viewBox="0 0 17 15"><g fill="none" stroke="#fff" stroke-width="1.1" stroke-opacity="0.85"><path d="M1.6 0.8 H14.6 Q15.6 0.8 15.6 1.8 V10 Q15.6 11 14.6 11 H6.6 L3.6 13.6 V11 H1.6 Q0.6 11 0.6 10 V1.8 Q0.6 0.8 1.6 0.8 Z"/><path d="M3 3.6 H13.2 M3 6 H13.2 M3 8.4 H9.8" stroke-width="1"/></g></svg>
<div style="left:185px;top:557px;width:116px;height:25px;background:#00adee;"></div>
<span class="t" id="t162" style="top:561.80px;font-size:11px;color:#fff;line-height:16px;letter-spacing:0.079px;left:213.50px;">Text hlavičky (<span style="font-size:14px;line-height:0;position:relative;top:1.2px">•</span>)</span>
<svg style="left:190.5px;top:561.7px;" width="12" height="15" viewBox="0 0 12 15"><g fill="none" stroke="#fff" stroke-width="1.1"><path d="M1.6 0.7 H7.6 L10.6 3.7 V13.2 Q10.6 14.2 9.6 14.2 H1.6 Q0.6 14.2 0.6 13.2 V1.7 Q0.6 0.7 1.6 0.7 Z" stroke-opacity="0.8"/><path d="M2.2 2.9 H7" stroke-width="1.6"/></g></svg>
<div style="left:302px;top:557px;width:111px;height:25px;background:#0054a6;"></div>
<span class="t" id="t163" style="top:561.80px;font-size:11px;color:#fff;line-height:16px;letter-spacing:0.175px;left:330.80px;">Text patičky ( )</span>
<svg style="left:307px;top:561.7px;" width="12" height="15" viewBox="0 0 12 15"><g fill="none" stroke="#fff" stroke-width="1.1"><path d="M1.6 0.7 H7.6 L10.6 3.7 V13.2 Q10.6 14.2 9.6 14.2 H1.6 Q0.6 14.2 0.6 13.2 V1.7 Q0.6 0.7 1.6 0.7 Z" stroke-opacity="0.8"/><path d="M2.4 11.9 H8.8" stroke-width="1.6"/></g></svg>
<div style="left:414px;top:557px;width:106px;height:25px;background:#0054a6;"></div>
<span class="t" id="t164" style="top:561.80px;font-size:11px;color:#fff;line-height:16px;letter-spacing:0.392px;left:440.80px;">Interní text ( )</span>
<svg style="left:419.4px;top:562px;" width="12" height="15" viewBox="0 0 12 15"><g fill="none" stroke="#fff" stroke-width="1.1"><path d="M1.6 0.7 H7.6 L10.6 3.7 V13.2 Q10.6 14.2 9.6 14.2 H1.6 Q0.6 14.2 0.6 13.2 V1.7 Q0.6 0.7 1.6 0.7 Z" stroke-opacity="0.8"/><rect x="3.4" y="7.4" width="4.8" height="3.6" stroke-width="1"/><path d="M4.3 7.4 V6.2 A1.5 1.5 0 0 1 7.3 6.2 V7.4" stroke-width="0.9"/><path d="M2.6 12.2 H9" stroke-width="0.9"/></g></svg>
<div style="left:521px;top:557px;width:165px;height:25px;background:#0054a6;"></div>
<span class="t" id="t165" style="top:561.80px;font-size:11px;color:#fff;line-height:16px;letter-spacing:0.391px;left:547.50px;">Interní text odběratele ( )</span>
<svg style="left:526.4px;top:562px;" width="12" height="15" viewBox="0 0 12 15"><g fill="none" stroke="#fff" stroke-width="1.1"><path d="M1.6 0.7 H7.6 L10.6 3.7 V13.2 Q10.6 14.2 9.6 14.2 H1.6 Q0.6 14.2 0.6 13.2 V1.7 Q0.6 0.7 1.6 0.7 Z" stroke-opacity="0.8"/><circle cx="5.8" cy="6.6" r="1.5" stroke-width="0.9"/><path d="M3 11.6 C3.2 9.4 8.4 9.4 8.6 11.6" stroke-width="0.9"/></g></svg>
<div style="left:687px;top:557px;width:81px;height:25px;background:#0054a6;"></div>
<span class="t" id="t166" style="top:561.80px;font-size:11px;color:#fff;line-height:16px;letter-spacing:0.122px;left:702.70px;">Kalkulace</span>
<div style="left:769px;top:557px;width:8px;height:25px;background:#0054a6;"></div>
<div style="left:771.6px;top:562px;width:5.4px;height:14px;border:1.1px solid #fff;box-sizing:border-box;border-right:none;"></div>
<svg style="left:779px;top:562px;" width="13" height="12" viewBox="0 0 13 12"><path d="M1 3.2 H11.6 L6.3 8.6 Z" fill="#111"/><path d="M0.6 10.2 H12" stroke="#111" stroke-width="1.4"/></svg>
<div style="left:184px;top:557px;width:1px;height:25px;background:#e8f3fb;"></div>
<div style="left:301px;top:557px;width:1px;height:25px;background:#e8f3fb;"></div>
<div style="left:413px;top:557px;width:1px;height:25px;background:#e8f3fb;"></div>
<div style="left:520px;top:557px;width:1px;height:25px;background:#e8f3fb;"></div>
<div style="left:686px;top:557px;width:1px;height:25px;background:#e8f3fb;"></div>
<div style="left:768px;top:557px;width:1px;height:25px;background:#e8f3fb;"></div>
<div style="left:78px;top:584px;width:719px;height:257px;background:#f0f0f0;border:1px solid #d5d5d5;box-sizing:border-box;border-top:none;"></div>
<div style="left:85px;top:590px;width:704px;height:243px;background:#fcfcfc;border:1px solid #b5b5b5;box-sizing:border-box;"></div>
<div style="left:86px;top:617px;width:702px;height:1px;background:#b5b5b5;"></div>
<div style="left:771px;top:618px;width:17px;height:214px;background:#f0f0f0;"></div>
<svg style="left:774px;top:623px;" width="11" height="8" viewBox="0 0 11 8"><path d="M0.8 7 L5.4 1.4 L10 7 Z" fill="#a3a3a3"/></svg>
<svg style="left:774px;top:819px;" width="11" height="8" viewBox="0 0 11 8"><path d="M0.8 1 L5.4 6.6 L10 1 Z" fill="#a3a3a3"/></svg>
<svg style="left:90px;top:594.5px;" width="20" height="20" viewBox="0 0 20 20"><circle cx="9.8" cy="9.8" r="8.9" fill="#fcfcfc" stroke="#0054a6" stroke-width="1.6"/><path d="M3.4 3.6 C5.6 2.4 8.6 2.6 10.2 4 C11 5.6 9.2 6.6 8.2 7.4 C7.4 8.6 8.6 9.8 7.2 10.6 C5.6 10.8 4.2 9.2 1.6 8.8 C1.4 6.8 2 4.8 3.4 3.6 Z M12.2 1.6 C15 2.4 17.4 4.8 18.2 7.6 C16.8 8.4 15.2 7 13.8 7.4 C12.4 6.6 11.4 4 12.2 1.6 Z M8.6 11.6 C10.2 10.6 12.8 10.8 14.4 12 C15.4 13.2 15.2 14.6 14.2 15.8 C13.2 17 12.2 18.2 10.8 18.4 C10.2 17 10.4 15.6 9.6 14.6 C8.6 13.6 7.8 12.4 8.6 11.6 Z" fill="#0054a6"/></svg>
<span class="t" id="t167" style="top:597.20px;font-size:12px;color:#124fa6;line-height:16px;letter-spacing:0.271px;left:119.30px;">implicitní</span>
<svg style="left:166px;top:611px;" width="6" height="4" viewBox="0 0 6 4"><path d="M0 0 H5.6 L2.8 3 Z" fill="#0054a6"/></svg>
<div style="left:179px;top:595px;width:1px;height:20px;background:#d6d6d6;"></div>
<span class="t" id="t168" style="top:597.20px;font-size:12px;color:#b1b1b1;line-height:16px;letter-spacing:-0.153px;left:188.90px;">Prostý text</span>
<svg style="left:242px;top:611px;" width="6" height="4" viewBox="0 0 6 4"><path d="M0 0 H5.6 L2.8 3 Z" fill="#0054a6"/></svg>
<div style="left:254px;top:595px;width:1px;height:19px;background:#d6d6d6;"></div>
<svg style="left:260px;top:597px;" width="16" height="16" viewBox="0 0 16 16"><path d="M0.7 9.6 V0.7 H9.6 V3.4" fill="none" stroke="#0054a6" stroke-width="1.4"/><rect x="4.6" y="4.6" width="10.4" height="10.4" fill="#0054a6"/></svg>
<svg style="left:284px;top:597px;" width="16" height="16" viewBox="0 0 16 16"><path d="M0.7 9.6 V0.7 H9.6 V3.4" fill="none" stroke="#0054a6" stroke-width="1.4"/><rect x="5.2" y="5.2" width="9.4" height="9.4" fill="#fcfcfc" stroke="#0054a6" stroke-width="1.3"/><path d="M7.4 9.9 H12.4 M9.9 7.4 V12.4" stroke="#0054a6" stroke-width="1.4"/></svg>
<div style="left:304px;top:595px;width:1px;height:19px;background:#d6d6d6;"></div>
<svg style="left:310px;top:597px;" width="16" height="16" viewBox="0 0 16 16"><g fill="none" stroke="#0054a6" stroke-width="1.2" stroke-linejoin="round"><path d="M11.4 1.4 L14.2 4.2 L5 13.4 L1.2 14.4 L2.2 10.6 Z M9.6 3.2 L12.4 6 M2.3 10.8 L4.8 13.3"/></g></svg>
<span class="t" id="t169" style="top:619.80px;font-size:12px;color:#000;line-height:16px;letter-spacing:0.198px;left:87.90px;">Text hlavičky</span>
<div style="left:159px;top:619px;width:1px;height:14px;background:#000;"></div>
</body></html>
